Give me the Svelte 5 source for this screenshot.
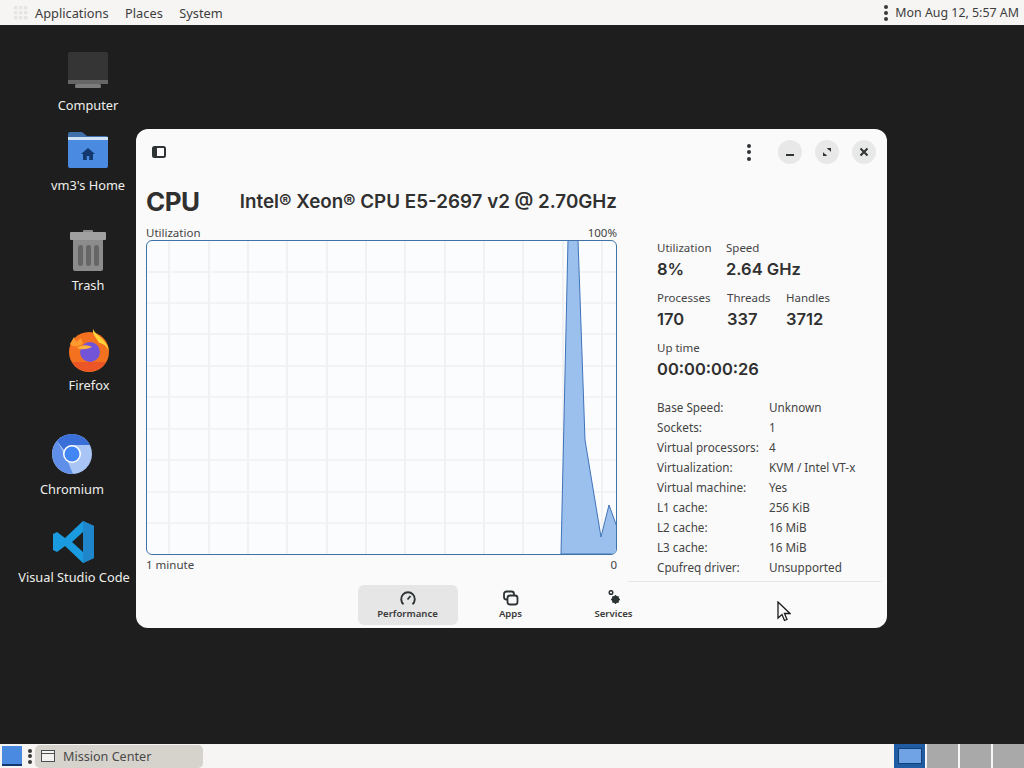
<script>
  const gridX = [23, 63, 102, 141, 181, 220, 259, 299, 338, 377, 417, 456]
  const gridY = [32, 63, 94, 126, 157, 189, 220, 252, 283]
  const graph = '415,314 422,0 432,0 439,200 455,297 463,265 471,287 471,314'

  const desktop = [
    { name: 'Computer', x: 38, y: 48, icon: 'computer' },
    { name: "vm3's Home", x: 38, y: 128, icon: 'home' },
    { name: 'Trash', x: 38, y: 228, icon: 'trash' },
    { name: 'Firefox', x: 39, y: 328, icon: 'firefox' },
    { name: 'Chromium', x: 22, y: 432, icon: 'chromium' },
    { name: 'Visual Studio Code', x: 24, y: 520, icon: 'vscode' },
  ]

  const details = [
    ['Base Speed:', 'Unknown'],
    ['Sockets:', '1'],
    ['Virtual processors:', '4'],
    ['Virtualization:', 'KVM / Intel VT-x'],
    ['Virtual machine:', 'Yes'],
    ['L1 cache:', '256 KiB'],
    ['L2 cache:', '16 MiB'],
    ['L3 cache:', '16 MiB'],
    ['Cpufreq driver:', 'Unsupported'],
  ]
</script>

<div class="screen">
  <header class="topbar">
    <div class="menus">
      <svg class="apps" width="16" height="16" viewBox="0 0 16 16" fill="#e6e5e3">
        {#each [1, 6, 11] as y}
          {#each [1, 6, 11] as x}
            <rect {x} {y} width="3.4" height="3.4" />
          {/each}
        {/each}
      </svg>
      <span>Applications</span>
      <span>Places</span>
      <span>System</span>
    </div>
    <div class="clock">
      <span class="dots"><i></i><i></i><i></i></span>
      <span>Mon Aug 12, 5:57 AM</span>
    </div>
  </header>

  <main class="desktop">
    {#each desktop as item}
      <div class="launcher" style="left:{item.x}px;top:{item.y - 25}px">
        <svg width="44" height="44" viewBox="0 0 44 44">
          {#if item.icon === 'computer'}
            <rect x="2" y="4" width="40" height="29" rx="2" fill="#353535" />
            <rect x="2" y="32" width="40" height="4" fill="#666" />
            <rect x="9" y="36" width="26" height="4" rx="1.5" fill="#7c7c7c" />
          {:else if item.icon === 'home'}
            <path d="M2 6a2 2 0 0 1 2-2h12l5 4h19a2 2 0 0 1 2 2v8H2z" fill="#3f6ea8" />
            <rect x="2" y="9" width="40" height="3" fill="#cfe2f8" />
            <path d="M2 12h40v26a2 2 0 0 1-2 2H4a2 2 0 0 1-2-2z" fill="#4a8ae0" />
            <path d="M22 20l-7 6h2v6h3.800v-4h2.400v4H27v-6h2z" fill="#12386e" />
          {:else if item.icon === 'trash'}
            <rect x="17" y="2" width="10" height="4" rx="1" fill="#8a8a8a" />
            <rect x="4" y="4" width="36" height="8" rx="1" fill="#a0a0a0" />
            <path d="M7 12h30v29a2 2 0 0 1-2 2H9a2 2 0 0 1-2-2z" fill="#8c8c8c" />
            <rect x="12" y="17" width="5" height="21" rx="2.500" fill="#666" />
            <rect x="20" y="17" width="5" height="21" rx="2.500" fill="#666" />
            <rect x="28" y="17" width="5" height="21" rx="2.500" fill="#666" />
          {:else if item.icon === 'firefox'}
            <circle cx="22" cy="24" r="20" fill="#f4721f" />
            <path d="M5 34a20 20 0 0 0 34 0z" fill="#e8492a" opacity=".7" />
            <path d="M26 1c2 6 14 10 16 22-3-6-7-8-10-8-2-5-7-8-6-14z" fill="#ffd43a" />
            <path d="M3 16l4-7 2 5 5-4 2 6-5 2c-3 1-6 0-8-2z" fill="#ff9a2e" />
            <circle cx="23" cy="24" r="10" fill="#7254d8" />
            <path d="M10 20c5-4 11-3 15-1-3 1-9 4-15 1z" fill="#ffb03a" />
          {:else if item.icon === 'chromium'}
            <circle cx="22" cy="22" r="20" fill="#a8c5f5" />
            <path d="M22 2a20 20 0 0 1 18 11H22a9 9 0 0 0-8 5L7 9a20 20 0 0 1 15-7z" fill="#3a6fd8" />
            <path d="M7 9l8 14 8 19A20 20 0 0 1 7 9z" fill="#5f8fe8" />
            <circle cx="22" cy="22" r="9" fill="#fff" />
            <circle cx="22" cy="22" r="7.500" fill="#4285f4" />
          {:else}
            <path d="M31 1l11 5v32l-11 5-18-17-8 6-4-2V14l4-2 8 6zM31 12l-11 10 11 10z" fill="#1a9be0" />
            <path d="M31 1l11 5v32l-11 5z" fill="#1f86cc" />
          {/if}
        </svg>
        <span>{item.name}</span>
      </div>
    {/each}

    <section class="window">
      <div class="titlebar">
        <svg width="14" height="12" viewBox="0 0 14 12" fill="none" stroke="#2e3436" stroke-width="2">
          <rect x="1" y="1" width="12" height="10" rx="1.500" />
          <rect x="2" y="2" width="3" height="8" fill="#2e3436" stroke="none" />
        </svg>
        <div class="controls">
          <span class="dots big"><i></i><i></i><i></i></span>
          <button class="ctl" aria-label="Minimize"><svg width="10" height="10" viewBox="0 0 10 10"><rect x="1" y="7" width="8" height="2" fill="#2e3436" /></svg></button>
          <button class="ctl" aria-label="Maximize"><svg width="10" height="10" viewBox="0 0 10 10" fill="#2e3436"><path d="M5 1h4v4L7.800 3.500 6 2.500zM5 9H1V5l1.200 1.500L4 7.500z" /></svg></button>
          <button class="ctl" aria-label="Close"><svg width="10" height="10" viewBox="0 0 10 10" stroke="#2e3436" stroke-width="2"><path d="M1.500 1.500l7 7M8.500 1.500l-7 7" /></svg></button>
        </div>
      </div>

      <div class="content">
        <div class="left">
          <div class="heading">
            <h1>CPU</h1>
            <h2>Intel® Xeon® CPU E5-2697 v2 @ 2.70GHz</h2>
          </div>
          <div class="axis top"><span>Utilization</span><span>100%</span></div>
          <div class="chart">
            <svg width="469" height="313" viewBox="1 1 469 313">
              {#each gridX as x}
                <line x1={x} x2={x} y1="0" y2="315" stroke="#f0f1f4" stroke-width="2" />
              {/each}
              {#each gridY as y}
                <line x1="0" x2="471" y1={y} y2={y} stroke="#f0f0f3" stroke-width="1.500" />
              {/each}
              <polygon points={graph} fill="#9cc0ee" stroke="#3f73b8" stroke-width="1" />
            </svg>
          </div>
          <div class="axis bottom"><span>1 minute</span><span>0</span></div>
        </div>

        <aside class="stats">
          <div class="row">
            <div class="stat w69"><label>Utilization</label><b>8%</b></div>
            <div class="stat"><label>Speed</label><b>2.64 GHz</b></div>
          </div>
          <div class="row">
            <div class="stat w70"><label>Processes</label><b>170</b></div>
            <div class="stat w59"><label>Threads</label><b>337</b></div>
            <div class="stat"><label>Handles</label><b>3712</b></div>
          </div>
          <div class="row">
            <div class="stat"><label>Up time</label><b>00:00:00:26</b></div>
          </div>
          <dl class="details">
            {#each details as [key, value]}
              <dt>{key}</dt>
              <dd>{value}</dd>
            {/each}
          </dl>
          <div class="rule"></div>
        </aside>
      </div>

      <nav class="tabs">
        <div class="tab active">
          <svg width="18" height="16" viewBox="0 0 18 16" fill="none" stroke="#2e3436" stroke-width="1.900">
            <path d="M4.500 14.200a6.800 6.800 0 1 1 9 0" />
            <path d="M8.500 9.500l3-3.500" stroke-width="1.800" />
          </svg>
          <span>Performance</span>
        </div>
        <div class="tab">
          <svg width="18" height="16" viewBox="0 0 18 16" fill="none" stroke="#2e3436" stroke-width="1.800">
            <rect x="2" y="1.500" width="10" height="8" rx="2.500" />
            <rect x="5.500" y="5.500" width="10" height="9" rx="2.500" fill="#fafafa" />
          </svg>
          <span>Apps</span>
        </div>
        <div class="tab">
          <svg width="18" height="16" viewBox="0 0 18 16" fill="none" stroke="#2e3436">
            <circle cx="6" cy="2.500" r="1.800" stroke-width="1.500" />
            <circle cx="10.500" cy="9.500" r="2.600" stroke-width="2.200" />
            <path d="M10.500 5v9M6 9.500h9M7.500 6.500l6 6M13.500 6.500l-6 6" stroke-width="1.300" />
          </svg>
          <span>Services</span>
        </div>
      </nav>
    </section>

    <svg class="pointer" width="14" height="21" viewBox="0 0 14 21">
      <path d="M1 1v16l4-3.500 2.500 6 2.500-1-2.500-6H13z" fill="#fafafa" stroke="#1a1a1a" stroke-width="1.300" />
    </svg>
  </main>

  <footer class="taskbar">
    <div class="show-desktop"></div>
    <span class="dots"><i></i><i></i><i></i></span>
    <div class="task">
      <svg width="16" height="14" viewBox="0 0 16 14" fill="#f4f3f1" stroke="#4a4f52">
        <rect x="1.500" y="1.500" width="13" height="11" />
        <path d="M1.500 4.500h13" />
      </svg>
      <span>Mission Center</span>
    </div>
    <div class="workspaces">
      <div class="ws current"><div></div></div>
      <div class="ws"></div>
      <div class="ws"></div>
      <div class="ws"></div>
    </div>
  </footer>
</div>

<style>
  :global(body) {
    margin: 0;
    background: #1e1e1e;
    font-family: "Noto Sans", sans-serif;
  }

  .screen {
    display: flex;
    flex-direction: column;
    width: 1024px;
    height: 768px;
    overflow: hidden;
  }

  .topbar {
    display: flex;
    justify-content: space-between;
    align-items: center;
    height: 25px;
    padding: 0 5px 0 13px;
    background: #f6f5f4;
    color: #3d3d3d;
    font-size: 12.800px;
    flex: none;
  }

  .menus { display: flex; align-items: center; gap: 16.500px; }
  .apps { margin-right: -10.500px; }
  .clock { display: flex; align-items: center; gap: 7px; font-size: 12.400px; }

  .dots { display: inline-flex; flex-direction: column; gap: 2px; }
  .dots i { width: 4px; height: 4px; border-radius: 50%; background: #3a3a3a; }
  .dots.big i { background: #2e3436; }

  .desktop { position: relative; flex: 1; }

  .launcher {
    position: absolute;
    display: flex;
    flex-direction: column;
    align-items: center;
    width: 100px;
    color: #eeeeec;
    font-size: 12.800px;
    line-height: 18px;
    white-space: nowrap;
    gap: 4px;
  }

  .window {
    position: absolute;
    left: 136px;
    top: 104px;
    width: 751px;
    height: 499px;
    display: flex;
    flex-direction: column;
    background: #fafafa;
    border-radius: 12px;
    color: #2e3436;
  }

  .titlebar {
    display: flex;
    justify-content: space-between;
    align-items: center;
    height: 46px;
    padding: 0 11px 0 16px;
    flex: none;
  }

  .controls { display: flex; align-items: center; gap: 13px; }
  .controls .dots { margin-right: 14px; gap: 2.500px; }

  .ctl {
    display: flex;
    align-items: center;
    justify-content: center;
    width: 24px;
    height: 24px;
    padding: 0;
    border: 0;
    border-radius: 50%;
    background: #e8e8e8;
  }

  .content { display: flex; flex: 1; min-height: 0; padding-left: 10px; }

  .left { width: 471px; flex: none; }

  .heading {
    display: flex;
    align-items: center;
    justify-content: space-between;
    height: 34px;
    margin-top: 10px;
  }

  h1 { margin: 0; font: 700 26px/34px Inter, sans-serif; letter-spacing: -0.500px; color: #303030; }
  h2 { margin: 0; font: 600 18.800px/34px Inter, sans-serif; color: #303030; }

  .axis {
    display: flex;
    justify-content: space-between;
    font-size: 11.500px;
    line-height: 16px;
    color: #444;
  }
  .axis.top { margin-top: 6px; height: 15px; }
  .axis.bottom { margin-top: 2px; }

  .chart {
    width: 469px;
    height: 313px;
    border: 1px solid #3f73a8;
    border-radius: 6px;
    background: #fbfcfe;
    overflow: hidden;
  }
  .chart svg { display: block; }

  .stats {
    position: relative;
    flex: 1;
    padding: 65px 0 0 40px;
    display: flex;
    flex-direction: column;
  }

  .row { display: flex; height: 50px; }
  .stat { display: flex; flex-direction: column; }
  .w69 { width: 69px; }
  .w70 { width: 70px; }
  .w59 { width: 59px; }

  .stat label { font-size: 11.500px; line-height: 16px; color: #444; }
  .stat b {
    margin-top: 2px;
    font: 600 16.500px/22px Inter, sans-serif;
    color: #303030;
    white-space: nowrap;
  }

  .details {
    display: grid;
    grid-template-columns: 112px 1fr;
    grid-auto-rows: 20px;
    margin: 7px 0 0;
    font-size: 11.700px;
    line-height: 20px;
    color: #444;
  }
  .details dt, .details dd { margin: 0; white-space: nowrap; }

  .rule {
    position: absolute;
    left: 11px;
    right: 6px;
    top: 406px;
    height: 1px;
    background: #e6e6e6;
  }

  .tabs {
    display: flex;
    justify-content: center;
    gap: 3px;
    height: 43px;
    margin-right: 2px;
    flex: none;
  }

  .tab {
    display: flex;
    flex-direction: column;
    align-items: center;
    justify-content: center;
    width: 100px;
    height: 40px;
    border-radius: 6px;
    font-size: 9.600px;
    font-weight: 600;
    line-height: 14px;
    color: #3a3a3a;
  }
  .tab span { margin-top: 1px; }
  .tab.active { background: #e6e6e6; }

  .pointer { position: absolute; left: 777px; top: 576px; }

  .taskbar {
    display: flex;
    align-items: center;
    height: 24px;
    background: #f6f5f4;
    flex: none;
  }

  .show-desktop {
    width: 20px;
    height: 18px;
    margin-left: 2px;
    background: #4a8ae0;
    border-bottom: 2px solid #12386e;
  }

  .taskbar > .dots { margin-left: 6px; gap: 1.500px; }

  .task {
    display: flex;
    align-items: center;
    gap: 7px;
    width: 168px;
    height: 23px;
    margin-left: 3px;
    padding-left: 5px;
    box-sizing: border-box;
    background: #d6d2cc;
    border-radius: 5px;
    font-size: 12.600px;
    color: #4a4a4a;
  }

  .workspaces { display: flex; gap: 2px; height: 24px; margin-left: auto; }
  .ws { width: 31px; background: #a9a9a9; }
  .ws.current {
    display: flex;
    align-items: center;
    justify-content: center;
    background: #1f5ca3;
  }
  .ws.current div {
    width: 22px;
    height: 14px;
    background: #6fa3e6;
    border: 1px solid #123f78;
  }
</style>
